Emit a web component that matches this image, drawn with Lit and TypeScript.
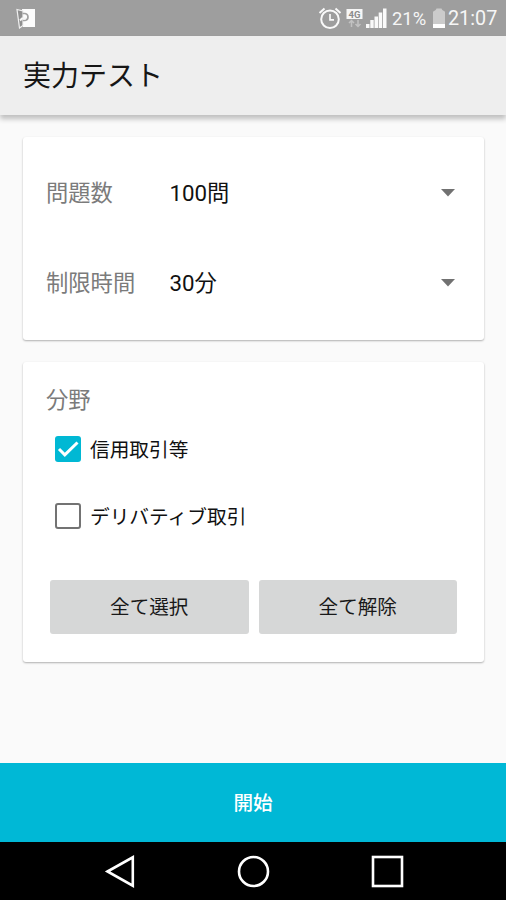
import { LitElement, html, css, svg } from "lit";
import { customElement, property, state } from "lit/decorators.js";
import { classMap } from "lit/directives/class-map.js";

@customElement("status-bar")
class StatusBar extends LitElement {
  static styles = css`
    :host {
      display: flex;
      align-items: center;
      height: 36px;
      flex: none;
      box-sizing: border-box;
      padding: 0 9px 0 16px;
      background: #9e9e9e;
      color: #f6f6f6;
      font-family: Roboto, sans-serif;
    }
    svg { display: block; flex: none; }
    .space { flex: 1; }
    .alarm { margin-right: 4px; }
    .net { margin-right: 3px; }
    .signal { margin-right: 5px; }
    .percent { font-size: 18.4px; width: 40px; line-height: 36px; padding-top: 2px; }
    .clock { font-size: 19.8px; width: 49px; line-height: 36px; padding-top: 2px; white-space: nowrap; }
    .lte { font: bold 9.5px Roboto, sans-serif; }
    .battery { margin-right: 2px; }
  `;
  render() {
    return html`
      <svg width="20" height="22" viewBox="0 0 20 22">
        <path d="M6 2H19V20H7Z" fill="#fcfcfc" />
        <path d="M1 2.500L7 4V18.500L3.500 21Z" fill="#8f8f8f" stroke="#f0f0f0" stroke-width="1.200" />
        <path d="M6.500 6.500H9Q12 7 12 10Q12 13 9 13.500H7" fill="none" stroke="#a2a2a2" stroke-width="1.700" />
        <path d="M4 13.500L6 11.500H10" fill="none" stroke="#f6f6f6" stroke-width="2" />
      </svg>
      <div class="space"></div>
      <svg class="alarm" width="24" height="24" viewBox="0 0 24 24" fill="none" stroke="#fafafa">
        <circle cx="12" cy="13.300" r="8.800" stroke-width="2" />
        <path d="M12 8V13.800H16" stroke-width="1.700" />
        <path d="M1.500 7L6.500 2.500M22.500 7L17.500 2.500" stroke-width="2" />
      </svg>
      <svg class="net" width="17" height="22" viewBox="0 0 17 22">
        <rect x="0.500" y="2" width="16" height="10" fill="#f6f6f6" />
        <text class="lte" x="8.500" y="10.500" text-anchor="middle" fill="#8c8c8c">4G</text>
        <path d="M5.500 20V14M3 16L5.500 13.500L8 16M12 13V19M9.500 17L12 19.500L14.500 17" fill="none" stroke="#c2c2c2" stroke-width="1.500" />
      </svg>
      <svg class="signal" width="21" height="22" viewBox="0 0 21 22" fill="#fafafa">
        <path d="M0 17H3.500V21H0ZM4.300 13H7.700V21H4.300ZM8.500 9.500H12V21H8.500ZM12.700 5.500H16.200V21H12.700ZM17 1.500H20.500V21H17Z" />
      </svg>
      <span class="percent">21%</span>
      <svg class="battery" width="14" height="22" viewBox="0 0 14 22">
        <path d="M1 5Q1 4 3 3.500Q4 3.200 4.500 1.500H9.500Q10 3.200 11 3.500Q13 4 13 5V21H1Z" fill="#cbcbcb" />
        <path d="M1 17H13V21H1Z" fill="#fff" />
      </svg>
      <span class="clock">21:07</span>
    `;
  }
}

@customElement("select-row")
class SelectRow extends LitElement {
  @property() label = "";
  @property() value = "";
  static styles = css`
    :host {
      display: flex;
      align-items: center;
      height: 90px;
      padding: 0 29px 0 23px;
      font-size: 22.3px;
      line-height: 30px;
    }
    .label { width: 123.500px; color: #7b7b7b; }
    .value { flex: 1; color: #111; }
    svg { display: block; }
  `;
  render() {
    return html`
      <span class="label">${this.label}</span>
      <span class="value">${this.value}</span>
      <svg width="14" height="8" viewBox="0 0 14 8"><path d="M0 0H14L7 7.500Z" fill="#717171" /></svg>
    `;
  }
}

@customElement("check-row")
class CheckRow extends LitElement {
  @property() label = "";
  @property({ type: Boolean }) checked = false;
  static styles = css`
    :host {
      display: flex;
      align-items: center;
      height: 67px;
      padding-left: 32px;
      font-size: 19.7px;
      color: #111;
    }
    .box {
      display: flex;
      width: 26px;
      height: 26px;
      box-sizing: border-box;
      border: 2.500px solid #737373;
      border-radius: 3px;
      margin-right: 9px;
    }
    .box.on { background: #00b8d4; border: 0; }
    .text { padding-bottom: 1px; }
    svg { display: block; }
  `;
  render() {
    return html`
      <span class=${classMap({ box: true, on: this.checked })}>
        ${this.checked
          ? html`<svg width="26" height="26" viewBox="0 0 26 26">
              <path d="M4 13L9.800 18.800L22.500 6.500" fill="none" stroke="#fff" stroke-width="3" />
            </svg>`
          : ""}
      </span>
      <span class="text">${this.label}</span>
    `;
  }
}

@customElement("nav-bar")
class NavBar extends LitElement {
  static styles = css`
    :host {
      display: flex;
      justify-content: center;
      align-items: center;
      gap: 101px;
      height: 58px;
      flex: none;
      padding-left: 1px;
      background: #000;
    }
    svg { display: block; }
  `;
  icon(shape: unknown) {
    return html`<svg width="33" height="33" viewBox="0 0 33 33" fill="none" stroke="#fff" stroke-width="2.600">${shape}</svg>`;
  }
  render() {
    return html`
      ${this.icon(svg`<path d="M4.500 16.500L29.800 2.300V30.700Z" />`)}
      ${this.icon(svg`<circle cx="16.500" cy="16.500" r="14.500" />`)}
      ${this.icon(svg`<rect x="2" y="2" width="29" height="29" />`)}
    `;
  }
}

@customElement("app-root")
class AppRoot extends LitElement {
  @state() private fields = [
    { name: "信用取引等", checked: true },
    { name: "デリバティブ取引", checked: false },
  ];
  static styles = css`
    :host {
      display: flex;
      flex-direction: column;
      height: 900px;
      background: #fafafa;
      font-family: Roboto, "Noto Sans CJK JP", sans-serif;
    }
    .toolbar {
      display: flex;
      align-items: center;
      height: 79px;
      flex: none;
      box-sizing: border-box;
      padding: 0 23px 3px;
      background: #eee;
      box-shadow: 0 4px 5px rgba(0, 0, 0, 0.24);
      font-size: 28px;
      color: #161616;
    }
    .content {
      flex: 1;
      display: flex;
      flex-direction: column;
      gap: 22px;
      padding: 22px 22px 0 23px;
    }
    .card {
      box-sizing: border-box;
      background: #fff;
      border-radius: 3px;
      box-shadow: 0 1px 2px rgba(0, 0, 0, 0.3);
    }
    .settings { height: 203px; padding-top: 11px; }
    .fields { height: 300px; padding-top: 23px; }
    .heading {
      padding-left: 23px;
      height: 30px;
      line-height: 30px;
      font-size: 22.3px;
      color: #7b7b7b;
    }
    .buttons {
      display: flex;
      gap: 10px;
      padding: 31px 27px 0;
    }
    button {
      flex: 1;
      height: 54px;
      border: 0;
      padding: 0 0 3px;
      border-radius: 3px;
      background: #d6d7d7;
      color: #191919;
      font: 400 19.6px Roboto, "Noto Sans CJK JP", sans-serif;
    }
    .start {
      flex: none;
      height: 79px;
      border-radius: 0;
      background: #00b8d6;
      color: #fff;
      font-weight: 500;
    }
  `;
  render() {
    return html`
      <status-bar></status-bar>
      <div class="toolbar">実力テスト</div>
      <div class="content">
        <div class="card settings">
          <select-row label="問題数" value="100問"></select-row>
          <select-row label="制限時間" value="30分"></select-row>
        </div>
        <div class="card fields">
          <div class="heading">分野</div>
          ${this.fields.map((f) => html`<check-row .label=${f.name} .checked=${f.checked}></check-row>`)}
          <div class="buttons">
            <button>全て選択</button>
            <button>全て解除</button>
          </div>
        </div>
      </div>
      <button class="start">開始</button>
      <nav-bar></nav-bar>
    `;
  }
}
